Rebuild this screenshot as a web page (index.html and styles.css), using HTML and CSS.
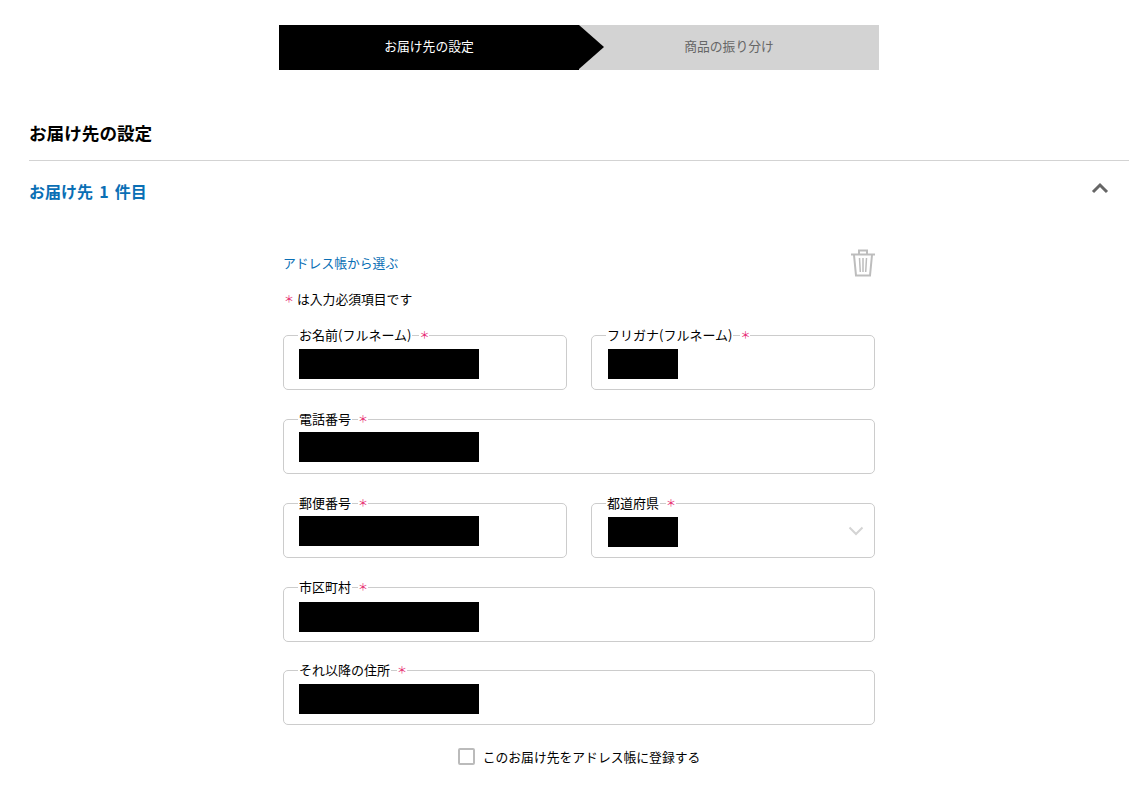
FILE: index.html
```html
<!DOCTYPE html>
<html lang="ja">
<head>
  <meta charset="UTF-8">
  <meta name="viewport" content="width=device-width, initial-scale=1.0">
  <title>お届け先の設定</title>
  <link rel="stylesheet" href="styles.css">
</head>
<body>

<div class="page">
  <div class="steps">
    <div class="step step-active">お届け先の設定</div>
    <div class="step">商品の振り分け</div>
  </div>

  <h2 class="section-title">お届け先の設定</h2>

  <div class="acc-head">
    <span class="acc-title">お届け先 1 件目</span>
    <svg class="acc-arrow" width="18" height="12" viewBox="0 0 18 12">
      <path d="M2 10 L9 3 L16 10" fill="none" stroke="#666" stroke-width="3"/>
    </svg>
  </div>

  <form class="address-form">
    <div class="form-top">
      <a class="address-link" href="#">アドレス帳から選ぶ</a>
      <svg class="trash" width="24" height="28" viewBox="0 0 24 28">
        <g fill="none" stroke="#bdbdbd">
          <path d="M0 5.5 H24" stroke-width="2"/>
          <path d="M8 5 V1.5 H16 V5" stroke-width="2"/>
          <path d="M3 6 L5 26.5 H19 L21 6" stroke-width="2"/>
          <path d="M8.5 9 L9.3 23 M12 9 V23 M15.5 9 L14.7 23" stroke-width="1.5"/>
        </g>
      </svg>
    </div>
    <p class="req-note"><span class="star">＊</span>は入力必須項目です</p>

    <div class="fields">
      <div class="field">
        <div class="field-label field-label-long"><span>お名前(フルネーム)</span><span class="star">＊</span></div>
        <div class="redact"></div>
      </div>
      <div class="field">
        <div class="field-label field-label-long"><span>フリガナ(フルネーム)</span><span class="star">＊</span></div>
        <div class="redact redact-short"></div>
      </div>
      <div class="field field-wide">
        <div class="field-label"><span>電話番号</span><span class="star">＊</span></div>
        <div class="redact redact-up"></div>
      </div>
      <div class="field">
        <div class="field-label"><span>郵便番号</span><span class="star">＊</span></div>
        <div class="redact redact-up"></div>
      </div>
      <div class="field">
        <div class="field-label"><span>都道府県</span><span class="star">＊</span></div>
        <div class="redact redact-short"></div>
        <svg class="select-arrow" width="16" height="10" viewBox="0 0 16 10">
          <path d="M1.5 1.5 L8 8 L14.5 1.5" fill="none" stroke="#d4d4d4" stroke-width="2"/>
        </svg>
      </div>
      <div class="field field-wide">
        <div class="field-label"><span>市区町村</span><span class="star">＊</span></div>
        <div class="redact redact-down"></div>
      </div>
      <div class="field field-wide">
        <div class="field-label"><span>それ以降の住所</span><span class="star">＊</span></div>
        <div class="redact"></div>
      </div>
    </div>

    <label class="save-check">
      <span class="checkbox"></span>
      <span>このお届け先をアドレス帳に登録する</span>
    </label>
  </form>
</div>

</body>
</html>
```

FILE: styles.css
```css
body {
  margin: 0;
  font-family: "Noto Sans CJK JP", "Noto Sans", sans-serif;
  font-size: 13px;
  color: #000;
  background: #fff;
}
.page {
  width: 1100px;
  margin-left: 29px;
  padding-top: 25px;
}
.steps {
  display: flex;
  width: 600px;
  margin: 0 auto;
}
.step {
  position: relative;
  width: 300px;
  height: 45px;
  line-height: 42px;
  text-align: center;
  font-size: 12.8px;
  background: #d3d3d3;
  color: #666;
}
.step-active {
  z-index: 1;
  background: #000;
  color: #fff;
}
.step-active::after {
  content: "";
  position: absolute;
  top: 0;
  left: 100%;
  border-left: 25px solid #000;
  border-top: 22.5px solid transparent;
  border-bottom: 22.5px solid transparent;
}
.section-title {
  margin: 50px 0 0;
  height: 40px;
  line-height: 26px;
  font-size: 17.6px;
  font-weight: bold;
  border-bottom: 1px solid #d3d3d3;
}
.acc-head {
  display: flex;
  justify-content: space-between;
  align-items: center;
  height: 62px;
}
.acc-title {
  margin-top: -2px;
  font-size: 16px;
  font-weight: bold;
  color: #0a6fb5;
  word-spacing: 2.5px;
}
.acc-arrow {
  margin-right: 20px;
  margin-top: -9px;
}
.address-form {
  width: 592px;
  margin: 0 auto;
  padding-top: 26px;
}
.form-top {
  display: flex;
  justify-content: space-between;
  align-items: center;
  height: 28px;
}
.address-link {
  margin-top: -2px;
  font-size: 12.8px;
  color: #0a6fb5;
  text-decoration: none;
}
.req-note {
  display: flex;
  gap: 3px;
  margin: 12px 0 0 1px;
  height: 20px;
  line-height: 20px;
  font-size: 12.8px;
}
.star {
  color: #e6246e;
  font-size: 10px;
}
.fields {
  display: grid;
  grid-template-columns: 1fr 1fr;
  column-gap: 24px;
  row-gap: 28.75px;
  margin-top: 26.3px;
}
.field {
  position: relative;
  height: 55px;
  box-sizing: border-box;
  padding: 13px 15px 0;
  border: 1px solid #ccc;
  border-radius: 5px;
}
.field-wide {
  grid-column: 1 / 3;
}
.field-label {
  position: absolute;
  top: -10px;
  left: 14px;
  display: flex;
  gap: 6px;
  line-height: 17px;
  font-size: 13px;
}
.field-label-long {
  gap: 7px;
}
.field-label span {
  padding: 0 1px;
  background: #fff;
}
.field-label .star {
  padding: 0;
}
.redact {
  width: 180px;
  height: 30px;
  background: #000;
}
.redact-short {
  width: 70px;
  margin-left: 1px;
}
.redact-up {
  margin-top: -1px;
}
.redact-down {
  margin-top: 1px;
}
.select-arrow {
  position: absolute;
  right: 10px;
  top: 22px;
}
.save-check {
  display: flex;
  justify-content: center;
  align-items: center;
  gap: 8px;
  margin-top: 22px;
  font-size: 12.8px;
}
.checkbox {
  box-sizing: border-box;
  width: 17px;
  height: 17px;
  border: 2px solid #bbb;
  border-radius: 2px;
}
```
